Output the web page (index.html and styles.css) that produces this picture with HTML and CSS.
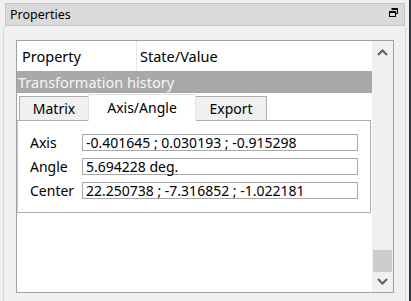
FILE: index.html
```html
<!DOCTYPE html>
<html lang="en">
<head>
  <meta charset="UTF-8">
  <title>Properties</title>
  <link rel="stylesheet" href="styles.css">
</head>
<body>
  <div class="window">
    <div class="dock">
      <div class="title-bar">
        <span>Properties</span>
        <svg class="float-icon" width="9" height="9" viewBox="0 0 9 9">
          <path d="M2.5 0.5h6v5h-2" fill="none" stroke="#000" stroke-width="1"/>
          <path d="M2.5 1.5h6" stroke="#000" stroke-width="1"/>
          <rect x="0.5" y="3.5" width="6" height="5" fill="none" stroke="#000" stroke-width="1"/>
          <path d="M0.5 4.5h6" stroke="#000" stroke-width="1"/>
        </svg>
      </div>
      <div class="dock-body">
        <div class="prop-box">
          <div class="prop-content">
            <div class="prop-header">
              <div class="col-name">Property</div>
              <div class="col-value">State/Value</div>
            </div>
            <div class="group-row">Transformation history</div>
            <div class="tabs">
              <div class="tab">Matrix</div>
              <div class="tab active">Axis/Angle</div>
              <div class="tab">Export</div>
            </div>
            <div class="tab-pane">
              <div class="field">
                <span class="field-label">Axis</span>
                <div class="field-input">-0.401645 ; 0.030193 ; -0.915298</div>
              </div>
              <div class="field">
                <span class="field-label">Angle</span>
                <div class="field-input">5.694228 deg.</div>
              </div>
              <div class="field">
                <span class="field-label">Center</span>
                <div class="field-input">22.250738 ; -7.316852 ; -1.022181</div>
              </div>
            </div>
          </div>
          <div class="scrollbar">
            <svg class="arrow" width="11" height="7" viewBox="0 0 11 7">
              <path d="M1 6L5.5 1.5L10 6" fill="none" stroke="#606060" stroke-width="2"/>
            </svg>
            <div class="track">
              <div class="thumb"></div>
            </div>
            <svg class="arrow" width="11" height="7" viewBox="0 0 11 7">
              <path d="M1 1L5.5 5.5L10 1" fill="none" stroke="#606060" stroke-width="2"/>
            </svg>
          </div>
        </div>
      </div>
    </div>
    <div class="edge"></div>
  </div>
</body>
</html>
```

FILE: styles.css
```css
body {
  margin: 0;
  padding: 0;
  background: #f0f0f0;
  font-family: 'Noto Sans', sans-serif;
  color: #000;
  overflow: hidden;
}

.window {
  display: flex;
  width: 411px;
  height: 301px;
}

.dock {
  width: 409px;
  padding-top: 3px;
  box-sizing: border-box;
}

.edge {
  width: 2px;
  background: #1f3a48;
}

.title-bar {
  margin-left: 5px;
  width: 400px;
  height: 23px;
  box-sizing: border-box;
  border: 1px solid #c6c6c6;
  background: #dadada;
  display: flex;
  align-items: center;
  justify-content: space-between;
  padding: 0 6px 0 4px;
  font-size: 12.5px;
}

.float-icon {
  margin-top: -4px;
}

.dock-body {
  margin-left: 3px;
  width: 403px;
  height: 275px;
  box-sizing: border-box;
  border-left: 1px solid #d8d8d8;
  border-right: 1px solid #d8d8d8;
  padding: 14px 0 0 12px;
}

.prop-box {
  width: 378px;
  height: 253px;
  box-sizing: border-box;
  border: 1px solid #a0a0a0;
  background: #fff;
  display: flex;
}

.prop-content {
  width: 355px;
  display: flex;
  flex-direction: column;
}

.prop-header {
  display: flex;
  height: 30px;
  font-size: 14.5px;
}

.col-name {
  width: 114px;
  border-right: 1px solid #e6e6e6;
  padding-left: 5px;
  display: flex;
  align-items: center;
}

.col-value {
  padding-left: 3px;
  display: flex;
  align-items: center;
}

.group-row {
  height: 22px;
  background: #a9a9a9;
  color: #f6f6f6;
  font-size: 14.5px;
  line-height: 22px;
  padding-left: 1px;
}

.tabs {
  display: flex;
  align-items: flex-end;
  height: 27px;
  padding-left: 2px;
}

.tab {
  height: 24px;
  box-sizing: border-box;
  border: 1px solid #adadad;
  border-bottom: none;
  background: #f0f0f0;
  font-size: 14px;
  display: flex;
  align-items: center;
  justify-content: center;
  margin-right: -1px;
}

.tab:nth-child(1) { width: 70px; }
.tab:nth-child(2) { width: 108px; }
.tab:nth-child(3) { width: 72px; }

.tab.active {
  height: 27px;
  background: #fff;
  border-color: #e0e0e0;
  position: relative;
  z-index: 1;
  margin-bottom: -1px;
  align-items: flex-start;
  padding-top: 3px;
}

.tab-pane {
  width: 354px;
  height: 93px;
  box-sizing: border-box;
  border: 1px solid #adadad;
  border-left-color: #c8c8c8;
  padding: 13px 0 0 12px;
  display: flex;
  flex-direction: column;
  gap: 7px;
}

.field {
  display: flex;
  align-items: center;
  height: 17px;
}

.field-label {
  width: 52px;
  font-size: 14px;
}

.field-input {
  width: 276px;
  height: 17px;
  box-sizing: border-box;
  border: 1px solid #a8a8a8;
  font-size: 14px;
  line-height: 15px;
  padding-left: 3px;
  white-space: nowrap;
}

.scrollbar {
  width: 21px;
  background: #f0f0f0;
  display: flex;
  flex-direction: column;
  align-items: center;
  padding: 8px 0 7px;
  box-sizing: border-box;
}

.track {
  flex: 1;
  width: 100%;
  position: relative;
  margin: 4px 0;
}

.thumb {
  position: absolute;
  left: 1px;
  right: 1px;
  bottom: 2px;
  height: 22px;
  background: #cdcdcd;
}
```
